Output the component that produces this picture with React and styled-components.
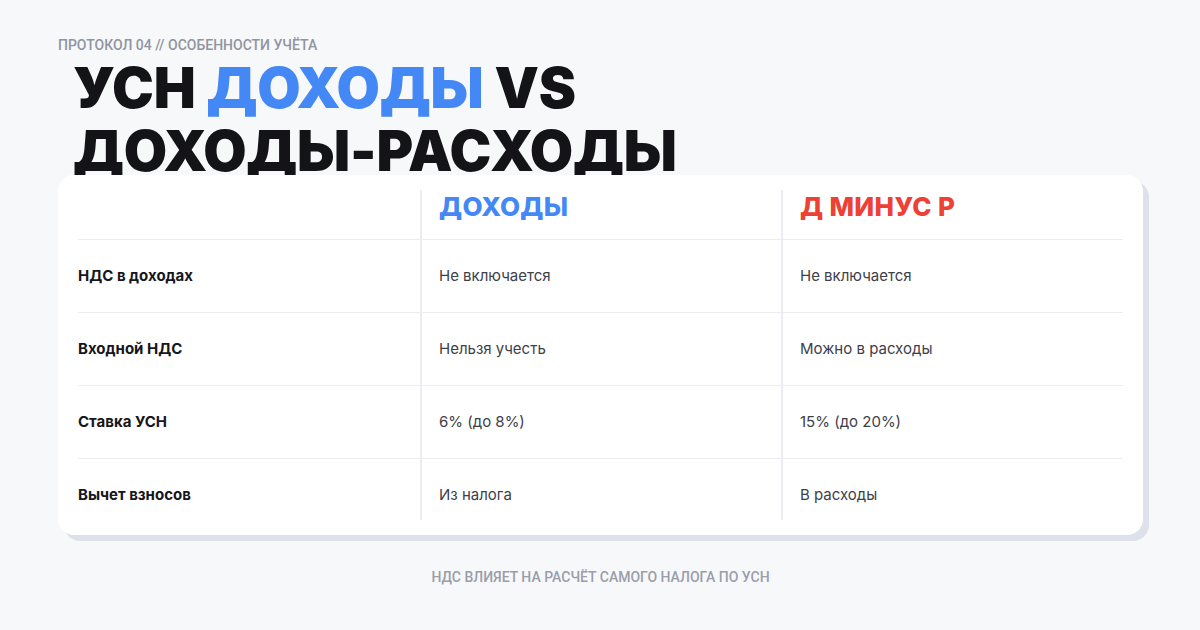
import React from 'react';
import styled, { createGlobalStyle } from 'styled-components';

const GlobalStyle = createGlobalStyle`
  html, body {
    margin: 0;
    padding: 0;
    background: #f7f8fa;
  }
  body {
    font-family: Inter, "Noto Sans", sans-serif;
    -webkit-font-smoothing: antialiased;
  }
`;

const Page = styled.div`
  width: 1200px;
  height: 630px;
  box-sizing: border-box;
  padding: 36px 57px 0 58px;
  display: flex;
  flex-direction: column;
  overflow: hidden;
`;

const Kicker = styled.div`
  font-family: Roboto, "Liberation Sans", sans-serif;
  font-weight: 500;
  font-size: 14px;
  line-height: 18px;
  color: #9094a1;
  text-transform: uppercase;
`;

const Title = styled.h1`
  margin: 3px 0 0 15px;
  font-family: Inter, sans-serif;
  font-weight: 900;
  font-size: 56px;
  line-height: 63px;
  letter-spacing: -0.2px;
  color: #141418;
  text-transform: uppercase;
`;

const Accent = styled.span`
  color: ${p => p.$color};
`;

const Card = styled.div`
  position: relative;
  margin-top: -8px;
  width: 1085px;
  height: 360px;
  box-sizing: border-box;
  padding: 15px 20px;
  background: #ffffff;
  border-radius: 16px;
  box-shadow: 6px 6px 0 #dde1ea;
`;

const Table = styled.div`
  display: grid;
  grid-template-columns: 342px 361px 342px;
  grid-template-rows: 50px 73px 73px 73px 61px;
`;

const Cell = styled.div`
  box-sizing: border-box;
  padding: ${p => (p.$head ? '1px 0 0' : '26px 0 0')} ${p => (p.$col > 0 ? '17px' : '0')};
  border-left: ${p => (p.$col > 0 ? '2px solid #ecedf2' : 'none')};
  border-bottom: ${p => (p.$last ? 'none' : '1px solid #ecedf2')};
  font-size: 15px;
  line-height: 20px;
  font-weight: ${p => (p.$col === 0 ? 700 : 400)};
  color: ${p => (p.$col === 0 ? '#16161b' : '#3d4049')};
`;

const HeadLabel = styled.div`
  font-size: 26px;
  line-height: 32px;
  font-weight: 800;
  letter-spacing: 0.35px;
  color: ${p => p.$color};
`;

const Footer = styled.div`
  margin-top: 33px;
  text-align: center;
  font-family: Roboto, "Liberation Sans", sans-serif;
  font-weight: 500;
  font-size: 14px;
  line-height: 18px;
  color: #9a9daa;
  text-transform: uppercase;
`;

const BLUE = '#4388f5';
const RED = '#ec4134';

const rows = [
  ['НДС в доходах', 'Не включается', 'Не включается'],
  ['Входной НДС', 'Нельзя учесть', 'Можно в расходы'],
  ['Ставка УСН', '6% (до 8%)', '15% (до 20%)'],
  ['Вычет взносов', 'Из налога', 'В расходы'],
];

export default function App() {
  return (
    <>
      <GlobalStyle />
      <Page>
        <Kicker>Протокол 04 // Особенности учёта</Kicker>
        <Title>
          УСН <Accent $color={BLUE}>Доходы</Accent> VS
          <br />
          Доходы-Расходы
        </Title>
        <Card>
          <Table>
            <Cell $head $col={0} />
            <Cell $head $col={1}>
              <HeadLabel $color={BLUE}>ДОХОДЫ</HeadLabel>
            </Cell>
            <Cell $head $col={2}>
              <HeadLabel $color={RED}>Д МИНУС Р</HeadLabel>
            </Cell>
            {rows.map((r, i) =>
              r.map((v, c) => (
                <Cell key={`${i}-${c}`} $col={c} $last={i === rows.length - 1}>
                  {v}
                </Cell>
              ))
            )}
          </Table>
        </Card>
        <Footer>НДС влияет на расчёт самого налога по УСН</Footer>
      </Page>
    </>
  );
}
